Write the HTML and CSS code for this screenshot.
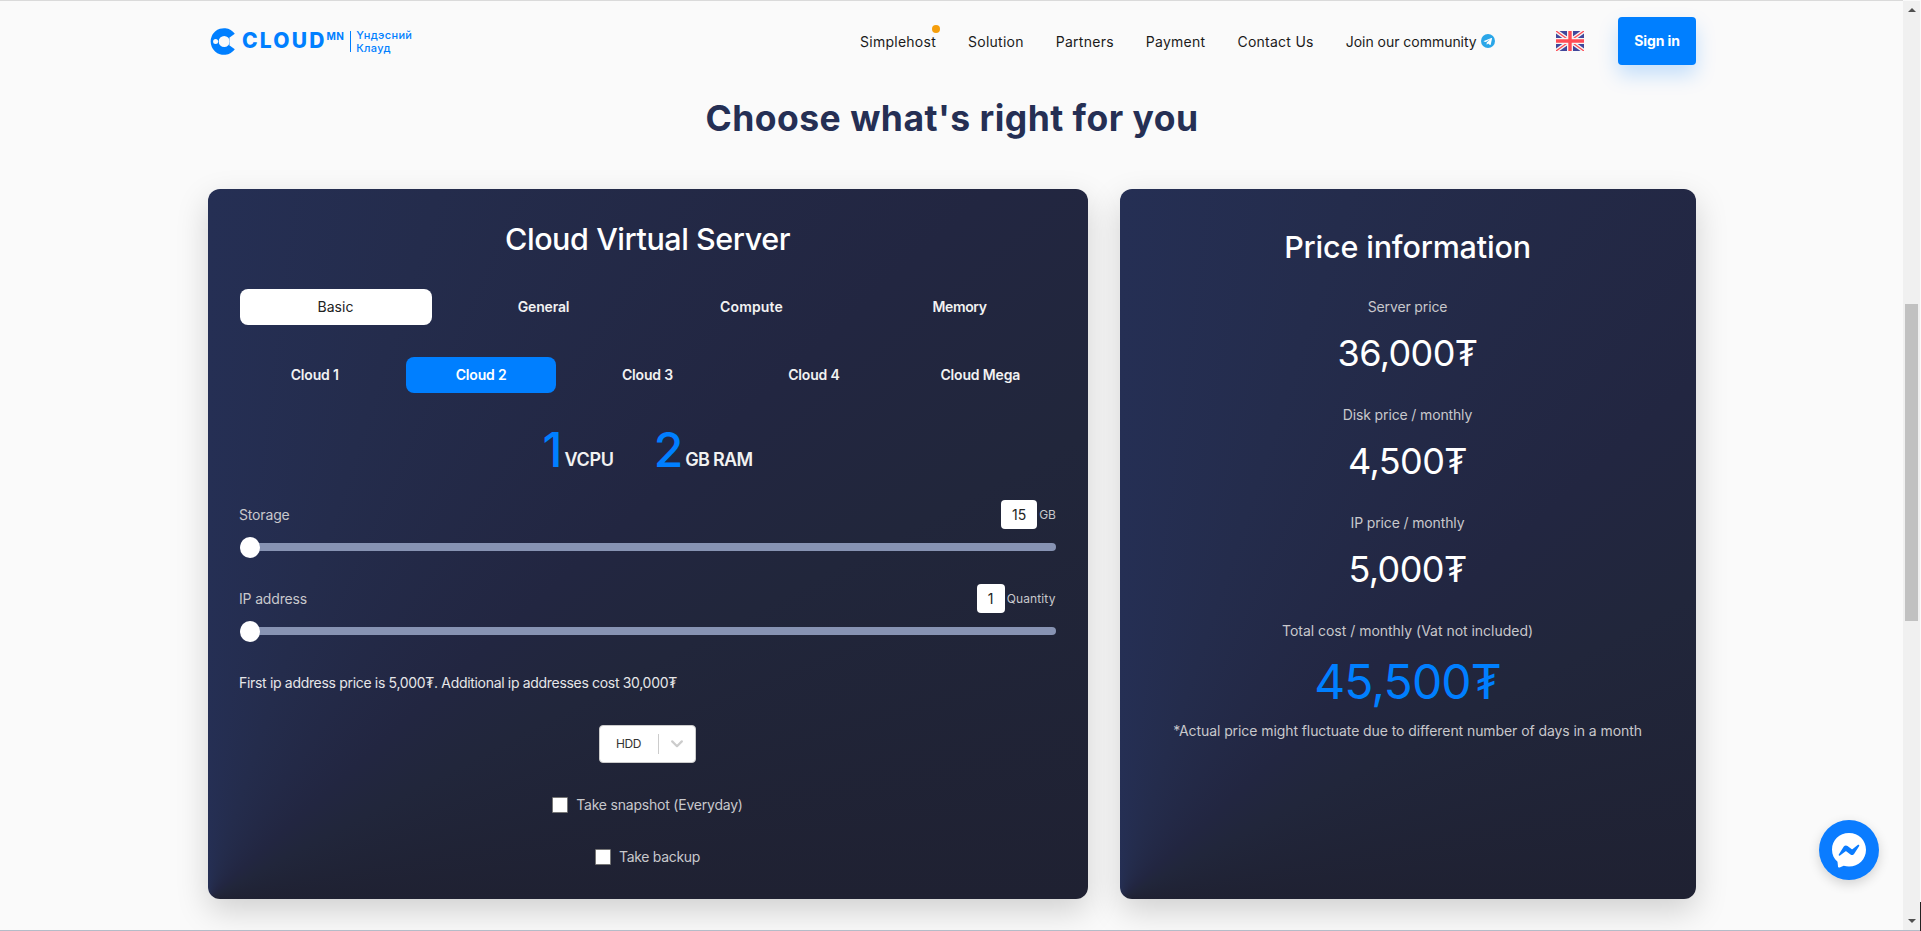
FILE: index.html
```html
<!DOCTYPE html>
<html lang="en">
<head>
<meta charset="utf-8">
<title>Cloud.mn</title>
<link rel="stylesheet" href="styles.css">
</head>
<body>
<div class="page">
  <header class="header">
    <a class="logo">
      <svg class="logo-mark" viewBox="0 0 25 27"><path fill="#007fff" fill-rule="evenodd" d="M24.800 5.800A13.300 13.300 0 1 0 24.800 21.200L19.300 17.300Q20.600 13.500 19.300 9.700ZM14.200 8a5.500 5.500 0 1 1 0 11a5.500 5.500 0 1 1 0-11ZM5.600 11a2.500 2.500 0 1 0 0 5a2.500 2.500 0 1 0 0-5Z"/></svg>
      <span class="logo-name">CLOUD</span><span class="logo-sup">MN</span>
      <span class="logo-tag"><span>Үндэсний</span><span>Клауд</span></span>
    </a>
    <nav class="nav">
      <a class="nav-new">Simplehost</a>
      <a>Solution</a>
      <a>Partners</a>
      <a>Payment</a>
      <a>Contact Us</a>
      <a class="nav-join"><span class="join-text">Join our community</span>
        <svg class="telegram" viewBox="0 0 24 24"><circle cx="12" cy="12" r="12" fill="#2aa6e8"/><path fill="#fff" d="M4.900 11.800 17.900 6.800c.7-.2 1.200.2 1 1.100l-2.200 10.200c-.2.8-.6 1-1.300.6l-3.300-2.500-1.700 1.600c-.4.4-.8.2-.8-.3l.3-2.900 6-5.500-7.600 4.800-3.300-1c-.7-.2-.7-.8-.1-1.100z"/></svg></a>
    </nav>
    <svg class="flag" viewBox="0 0 28 20"><rect width="28" height="20" rx="2" fill="#41479b"/><path d="M0 0 28 20M28 0 0 20" stroke="#f5f5f5" stroke-width="4"/><path d="M0 0 28 20M28 0 0 20" stroke="#ff4b55" stroke-width="1.300"/><path d="M14 0V20M0 10H28" stroke="#f5f5f5" stroke-width="6"/><path d="M14 0V20M0 10H28" stroke="#ff4b55" stroke-width="3.400"/></svg>
    <button class="signin">Sign in</button>
  </header>

  <h1 class="heading">Choose what's right for you</h1>

  <main class="cards">
    <section class="card config">
      <h2 class="card-title">Cloud Virtual Server</h2>
      <div class="tabs">
        <button class="tab tab-light">Basic</button>
        <button class="tab">General</button>
        <button class="tab tab-loose">Compute</button>
        <button class="tab tab-tight">Memory</button>
      </div>
      <div class="tabs plans">
        <button class="tab">Cloud 1</button>
        <button class="tab tab-blue">Cloud 2</button>
        <button class="tab">Cloud 3</button>
        <button class="tab">Cloud 4</button>
        <button class="tab">Cloud Mega</button>
      </div>
      <div class="specs">
        <div class="spec"><span class="num">1</span><span class="unit">VCPU</span></div>
        <div class="spec"><span class="num">2</span><span class="unit unit-ram">GB RAM</span></div>
      </div>
      <div class="field-head"><span class="field-name">Storage</span><div class="qty"><span class="box box-wide">15</span><span class="qty-gb">GB</span></div></div>
      <div class="slider"><span class="thumb"></span></div>
      <div class="field-head second"><span class="field-name">IP address</span><div class="qty"><span class="box">1</span><span>Quantity</span></div></div>
      <div class="slider"><span class="thumb"></span></div>
      <p class="hint">First ip address price is 5,000₮. Additional ip addresses cost 30,000₮</p>
      <div class="select"><span class="select-value">HDD</span><span class="sep"></span>
        <svg class="chevron" viewBox="0 0 12 8"><path d="M1.200 1.400 6 6.200 10.800 1.400" fill="none" stroke="#ccc" stroke-width="2.200" stroke-linecap="round" stroke-linejoin="round"/></svg></div>
      <label class="check check-wide"><span class="check-box"></span>Take snapshot (Everyday)</label>
      <label class="check"><span class="check-box"></span>Take backup</label>
    </section>
    <section class="card prices">
      <h2 class="card-title price-title">Price information</h2>
      <div class="label">Server price</div>
      <div class="price">36,000₮</div>
      <div class="label">Disk price / monthly</div>
      <div class="price">4,500₮</div>
      <div class="label">IP price / monthly</div>
      <div class="price">5,000₮</div>
      <div class="label label-total">Total cost / monthly (Vat not included)</div>
      <div class="total">45,500₮</div>
      <div class="note">*Actual price might fluctuate due to different number of days in a month</div>
    </section>
  </main>
</div>
<div class="messenger"><svg viewBox="0 0 60 60"><path fill="#fff" d="M30 13C20.300 13 13 20.200 13 29.500c0 5.200 2 9.300 5.500 12.200l.5 4.800c.1 1 .9 1.300 1.700 1l4-1.700c1.700.5 3.500.7 5.300.7 9.700 0 17-7.200 17-16.700S39.700 13 30 13z"/><path fill="#0a7cff" d="m19.800 34.500 5-7.900c.8-1.300 2.500-1.600 3.700-.7l4 3c.4.3.8.3 1.200 0l5.300-4.100c.7-.5 1.700.3 1.200 1.100l-5 7.900c-.8 1.300-2.500 1.600-3.700.7l-4-3c-.4-.3-.8-.3-1.200 0l-5.300 4.100c-.7.5-1.700-.3-1.200-1.100z"/></svg></div>
<div class="scrollbar"><i class="up"></i><i class="bar"></i><i class="down"></i></div>
<div class="edge"></div>
</body>
</html>
```
FILE: styles.css
```css
* { box-sizing: border-box; }
body { margin: 0; height: 931px; overflow: hidden; background: #fafafa; font-family: Inter, "Open Sans", sans-serif; font-size: 14px; line-height: 20px; color: #1a1a1a; }
h1, h2, p { margin: 0; font-weight: inherit; }
button { border: 0; padding: 0; background: none; font: inherit; color: inherit; letter-spacing: inherit; }
svg { display: block; }
.page { width: 1903px; height: 931px; padding: 0 207px 0 208px; border-top: 1px solid #dadada; overflow: hidden; }

.header { display: flex; align-items: center; height: 80px; }
.logo { display: flex; align-items: center; width: 652px; height: 30px; padding-left: 2px; color: #007fff; }
.logo-mark { width: 25px; height: 27px; margin-right: 7px; }
.logo-name { font-size: 21px; font-weight: 800; letter-spacing: 2.2px; }
.logo-sup { align-self: flex-start; margin-top: 4px; font-size: 10px; line-height: 12px; font-weight: 700; letter-spacing: .3px; }
.logo-tag { display: flex; flex-direction: column; height: 21px; margin-left: 6px; padding-left: 5px; border-left: 1px solid #007fff; font-size: 11px; font-weight: 500; letter-spacing: .35px; }
.logo-tag span { line-height: 13px; margin-top: -2px; }
.logo-tag span + span { margin-top: 0; }
.nav { display: flex; gap: 32px; width: 696px; padding-top: 2px; white-space: nowrap; letter-spacing: .26px; }
.nav-new { position: relative; }
.nav-new::after { content: ""; position: absolute; right: -4px; top: -7px; width: 8px; height: 8px; border-radius: 50%; background: #f59e0b; }
.nav-join { display: flex; align-items: center; gap: 4px; }
.join-text { letter-spacing: -.03px; }
.telegram { width: 14px; height: 14px; margin-top: -2px; }
.flag { width: 28px; height: 20px; margin-right: 34px; }
.signin { width: 78px; height: 48px; border-radius: 4px; background: #007fff; color: #fff; font-weight: 700; letter-spacing: -.1px; box-shadow: 0 10px 20px rgba(0, 127, 255, .22); }

.heading { margin-top: 14px; height: 48px; line-height: 48px; font-size: 35.500px; font-weight: 750; letter-spacing: .48px; color: #252f54; text-align: center; }

.cards { display: flex; gap: 32px; margin-top: 46px; margin-left: -.5px; }
.card { display: flex; flex-direction: column; align-items: center; height: 710px; border-radius: 12px; background: conic-gradient(from 0deg at 0 100%, #252f54 0deg, #242c4c 18deg, #222641 48deg, #21263b 62deg, #1f2132 90deg, #1f2132 360deg); box-shadow: 0 12px 32px rgba(0, 0, 0, .17); color: #c8c8cc; }
.config { width: 880px; padding: 30px 32px 0; }
.prices { width: 576px; padding-top: 38px; }
.card-title { font-size: 30.500px; line-height: 40px; font-weight: 500; letter-spacing: -.44px; color: #fff; white-space: nowrap; }
.price-title { letter-spacing: -.18px; }
.tabs { display: grid; grid-template-columns: repeat(4, 1fr); gap: 16px; width: 100%; margin-top: 30px; }
.plans { grid-template-columns: repeat(5, 1fr); margin-top: 32px; }
.tab { height: 36px; border-radius: 8px; color: #f2f2f2; font-weight: 600; letter-spacing: -.17px; }
.tab-light { background: #fff; color: #222; font-weight: 400; letter-spacing: 0; }
.tab-loose { letter-spacing: .17px; }
.tab-tight { letter-spacing: -.39px; }
.tab-blue { background: #007fff; color: #fff; }
.specs { display: flex; gap: 40px; margin-top: 27px; height: 59px; line-height: 60px; }
.spec { display: flex; align-items: baseline; gap: 4px; }
.num { font-size: 48px; font-weight: 500; letter-spacing: -2px; color: #007fff; }
.unit { padding-bottom: 1px; font-size: 18px; line-height: 24px; font-weight: 600; letter-spacing: -.34px; color: #f2f2f2; transform: translateY(-1px); }
.unit-ram { letter-spacing: -.68px; }
.field-head { display: flex; align-items: center; justify-content: space-between; width: 100%; height: 29px; margin-top: 21px; }
.field-name { margin-left: -.5px; letter-spacing: -.16px; }
.second { margin-top: 26px; }
.qty { display: flex; align-items: center; gap: 2px; font-size: 12px; letter-spacing: .12px; }
.qty-gb { letter-spacing: -.3px; }
.box { width: 28px; height: 29px; border-radius: 4px; background: #fff; color: #222; font-size: 14px; line-height: 29px; text-align: center; }
.box-wide { width: 36px; }
.slider { display: flex; align-items: center; width: 100%; height: 8px; margin: 14px 0 7px; border-radius: 4px; background: #8793b3; }
.thumb { width: 20px; height: 21px; border-radius: 50%; background: #fff; }
.hint { align-self: flex-start; margin: 31px 0 0 -.5px; color: #e6e6e8; letter-spacing: -.32px; white-space: nowrap; }
.select { display: flex; align-items: center; width: 97px; height: 38px; margin-top: 32px; padding-left: 16px; border: 1px solid #ccc; border-radius: 4px; background: #fff; color: #333; font-size: 12px; }
.select-value { width: 26px; letter-spacing: -.42px; }
.sep { width: 1px; height: 20px; margin: 0 12px 0 16px; background: #ccc; }
.chevron { width: 12px; height: 8px; }
.check { display: flex; align-items: center; gap: 8px; height: 20px; margin-top: 32px; letter-spacing: -.3px; white-space: nowrap; }
.check-wide { letter-spacing: -.21px; }
.check-box { width: 16px; height: 16px; border: 1px solid #767676; border-radius: 1px; background: #fff; }
.label { margin-top: 27px; letter-spacing: -.14px; white-space: nowrap; }
.card-title + .label { margin-top: 30px; }
.label-total { letter-spacing: -.02px; }
.price { margin-top: 11px; font-size: 36px; line-height: 50px; font-weight: 430; letter-spacing: -.6px; color: #fff; }
.total { margin-top: 11px; font-size: 48px; line-height: 60px; letter-spacing: -.9px; color: #007fff; }
.note { margin-top: 9px; letter-spacing: -.08px; white-space: nowrap; }

.messenger { position: fixed; left: 1819px; top: 820px; width: 60px; height: 60px; border-radius: 50%; background: #0a7cff; box-shadow: 0 4px 12px rgba(0, 0, 0, .16); }
.scrollbar { position: fixed; left: 1903px; top: 1px; width: 17px; height: 929px; background: #f0f0f0; }
.scrollbar i { position: absolute; }
.up { left: 5px; top: 7px; border: 4px solid transparent; border-top: 0; border-bottom-color: #505050; }
.down { left: 5px; bottom: 7px; border: 4px solid transparent; border-bottom: 0; border-top-color: #505050; }
.bar { left: 2px; top: 303px; width: 13px; height: 317px; background: #c1c1c1; }
.edge { position: fixed; left: 0; bottom: 0; width: 1921px; height: 1px; background: #b4bcc8; }
.edge::after { content: ""; position: absolute; right: 0; bottom: 0; width: 1px; height: 29px; background: #222; }
```
